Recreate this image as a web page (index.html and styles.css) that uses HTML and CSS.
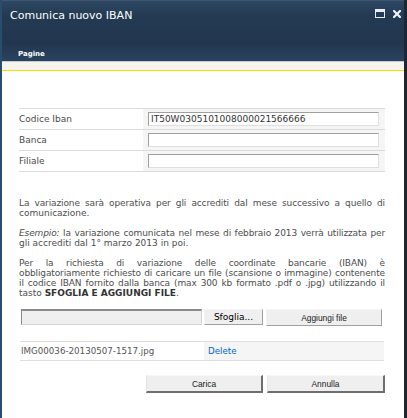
FILE: index.html
```html
<!DOCTYPE html>
<html lang="it">
<head>
<meta charset="utf-8">
<title>Comunica nuovo IBAN</title>
<link rel="stylesheet" href="styles.css">
</head>
<body>
<div class="dialog">
  <header class="titlebar">
    <div class="title-row">
      <h1 class="title">Comunica nuovo IBAN</h1>
      <div class="ctrls">
        <svg class="ic-max" width="10" height="9" viewBox="0 0 10 9"><rect x="0.5" y="0.5" width="9" height="8" fill="none" stroke="#e8edf2" stroke-width="1"/><rect x="1" y="1" width="8" height="2" fill="#e8edf2"/></svg>
        <svg class="ic-close" width="8" height="8" viewBox="0 0 8 8"><path d="M1 1 L7 7 M7 1 L1 7" stroke="#eef2f6" stroke-width="2.2" stroke-linecap="square"/></svg>
      </div>
    </div>
    <div class="ribbon"><span class="tab">Pagine</span></div>
  </header>
  <div class="strip"></div>
  <main class="content">
    <table class="form">
      <tr><td class="lbl">Codice Iban</td><td class="fld"><input class="txt" type="text" value="IT50W0305101008000021566666"></td></tr>
      <tr><td class="lbl">Banca</td><td class="fld"><input class="txt" type="text" value=""></td></tr>
      <tr><td class="lbl">Filiale</td><td class="fld"><input class="txt" type="text" value=""></td></tr>
    </table>
    <div class="notes">
      <p><span class="ln">La variazione sarà operativa per gli accrediti dal mese successivo a quello di</span><span class="last">comunicazione.</span></p>
      <p><span class="ln"><em>Esempio:</em> la variazione comunicata nel mese di febbraio 2013 verrà utilizzata per</span><span class="last">gli accrediti dal 1° marzo 2013 in poi.</span></p>
      <p><span class="ln">Per la richiesta di variazione delle coordinate bancarie (IBAN) è</span><span class="ln">obbligatoriamente richiesto di caricare un file (scansione o immagine) contenente</span><span class="ln">il codice IBAN fornito dalla banca (max 300 kb formato .pdf o .jpg) utilizzando il</span><span class="last">tasto <b>SFOGLIA E AGGIUNGI FILE</b>.</span></p>
    </div>
    <div class="upload">
      <div class="filebox"></div>
      <button class="btn browse" type="button">Sfoglia...</button>
      <button class="btn add" type="button">Aggiungi file</button>
    </div>
    <div class="files">
      <div class="fname">IMG00036-20130507-1517.jpg</div>
      <div class="fact"><span class="del">Delete</span></div>
    </div>
    <div class="actions">
      <button class="btn act" type="button">Carica</button>
      <button class="btn act" type="button">Annulla</button>
    </div>
  </main>
</div>
</body>
</html>
```
FILE: styles.css
```css
html, body {
  margin: 0;
  padding: 0;
  background: #ffffff;
}
.dialog {
  width: 407px;
  height: 418px;
  box-sizing: border-box;
  border-left: 2px solid #2c4c6e;
  border-right: 3px solid #1d2732;
  background: #ffffff;
  font-family: "DejaVu Sans", Verdana, sans-serif;
  overflow: hidden;
}
.titlebar {
  height: 61px;
  box-sizing: border-box;
  margin: 0 -3px 0 -2px;
  border-top: 1px solid #3d5672;
  background: linear-gradient(#2e4763 0%, #243a53 25%, #22364e 70%, #2a4360 100%);
  display: flex;
  flex-direction: column;
}
.title-row {
  display: flex;
  align-items: flex-start;
  justify-content: space-between;
  padding: 8px 6px 0 10px;
}
.title {
  margin: 0;
  font-weight: normal;
  font-size: 11px;
  line-height: 13px;
  color: #ffffff;
}
.ctrls {
  display: flex;
  align-items: flex-start;
  gap: 8px;
}
.ic-max { display: block; }
.ic-close { display: block; margin-top: 1px; }
.ribbon {
  margin-top: auto;
  padding: 0 0 2px 18px;
}
.tab {
  display: block;
  font-size: 7px;
  font-weight: bold;
  line-height: 9px;
  color: #ffffff;
}
.strip {
  height: 8px;
  border-top: 1px solid #c3ccd6;
  border-bottom: 1px solid #f6df00;
  background: #f7f5eb;
}
.content {
  padding: 0 19px 0 17px;
}
.form {
  margin-top: 37px;
  width: 366px;
  border-collapse: collapse;
  border-top: 1px solid #dcdcdc;
}
.form td {
  height: 20px;
  padding: 0;
  border-bottom: 1px solid #dcdcdc;
  vertical-align: middle;
}
.lbl {
  width: 124px;
  font-size: 9px;
  color: #4a4a4a;
}
.fld {
  background: #f5f5f5;
}
.txt {
  display: block;
  box-sizing: border-box;
  width: 231px;
  height: 14px;
  margin: 0 0 1px 5px;
  padding: 0 0 0 2px;
  border: 1px solid;
  border-color: #9f9f9f #dedede #dedede #9f9f9f;
  background: #ffffff;
  font-family: "DejaVu Sans", Verdana, sans-serif;
  font-size: 9px;
  line-height: 12px;
  color: #333333;
  outline: none;
}
.notes {
  margin-top: 26px;
  width: 366px;
  font-size: 9px;
  line-height: 10px;
  color: #4d4d4d;
}
.notes p {
  margin: 0 0 10px 0;
}
.notes p:last-child {
  margin-bottom: 0;
}
.ln {
  display: block;
  white-space: nowrap;
  letter-spacing: -0.12px;
  text-align: justify;
  text-align-last: justify;
}
.last {
  display: block;
  white-space: nowrap;
}
.notes b {
  color: #333333;
}
.upload {
  margin-top: 11px;
  display: flex;
  height: 16px;
  padding-left: 2px;
}
.filebox {
  width: 181px;
  box-sizing: border-box;
  height: 16px;
  border: 1px solid;
  border-color: #8a8a8a #d4d4d4 #d4d4d4 #8a8a8a;
  border-top-width: 2px;
  background: #efefef;
}
.btn {
  box-sizing: border-box;
  margin: 0;
  padding: 0;
  border: 1px solid;
  border-color: #f4f4f4 #a0a0a0 #a0a0a0 #f4f4f4;
  background: #efefef;
  color: #1a1a1a;
  font-family: "Liberation Sans", Arial, sans-serif;
  font-size: 8.4px;
  line-height: 12px;
}
.browse {
  margin-left: 2px;
  width: 59px;
  height: 16px;
  font-family: "DejaVu Sans", Verdana, sans-serif;
  font-size: 9px;
  color: #000000;
}
.add {
  margin-left: 3px;
  width: 116px;
  height: 17px;
}
.files {
  margin-top: 16px;
  margin-left: 1px;
  width: 364px;
  display: flex;
  height: 20px;
  box-sizing: border-box;
  border-top: 1px solid #dedede;
  border-bottom: 1px solid #dedede;
  font-size: 8.7px;
  line-height: 18px;
}
.fname {
  width: 183px;
  padding-left: 1px;
  color: #555555;
}
.fact {
  flex: 1;
  background: #f5f5f5;
  padding-left: 4px;
}
.del {
  color: #0066cc;
  cursor: pointer;
}
.actions {
  margin-top: 14px;
  display: flex;
  justify-content: flex-end;
  gap: 4px;
}
.act {
  width: 117px;
  height: 18px;
  border-width: 1px 2px 2px 1px;
  border-color: #f7f7f7 #6e6e6e #6e6e6e #e4e4e4;
}
.act + .act {
  width: 118px;
}
```
